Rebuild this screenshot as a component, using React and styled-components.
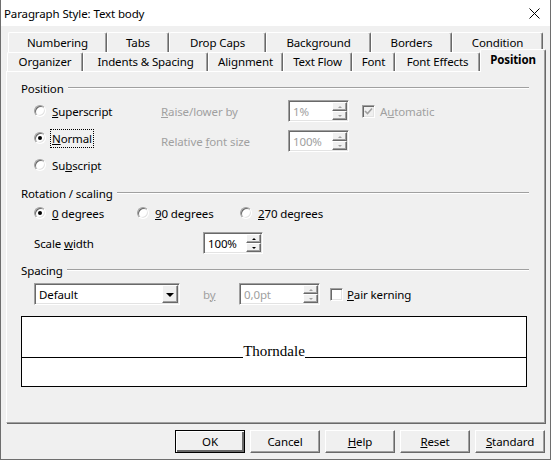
import React from "react";
import styled, { createGlobalStyle, css } from "styled-components";

const FONT = `"Noto Sans", "Segoe UI", sans-serif`;

const Global = createGlobalStyle`
  html, body { margin: 0; padding: 0; background: #f0f0f0; }
  body { font-family: ${FONT}; font-size: 11.5px; letter-spacing: -0.12px; color: #000; }
  * { box-sizing: border-box; }
`;

const Window = styled.div`
  width: 551px;
  height: 460px;
  border: 1px solid #6e6e6e;
  border-top: none;
  background: #f0f0f0;
  display: flex;
  flex-direction: column;
  overflow: hidden;
`;

const TitleBar = styled.div`
  height: 26px;
  flex: none;
  background: #fff;
  display: flex;
  align-items: center;
  justify-content: space-between;
  padding: 0 10px 0 3px;
`;

const Main = styled.div`
  padding: 6px 5px 0 5px;
  display: flex;
  flex-direction: column;
`;

const TabRow = styled.div`
  display: flex;
  align-items: flex-end;
  height: ${(p) => p.$h}px;
  margin-left: ${(p) => p.$offset}px;
`;

const Tab = styled.div`
  width: ${(p) => p.$w}px;
  height: 100%;
  flex: none;
  display: flex;
  align-items: center;
  justify-content: center;
  background: #f0f0f0;
  border-top: 1px solid #fff;
  border-left: 1px solid #fff;
  border-right: 1px solid #696969;
  box-shadow: inset -1px 0 0 #a0a0a0;
  border-radius: 2px 2px 0 0;
  white-space: nowrap;
  padding-bottom: 1px;
  ${(p) =>
    p.$active &&
    css`
      height: 23px;
      margin-bottom: -1px;
      font-weight: bold;
      position: relative;
      z-index: 1;
      padding-bottom: 3px;
    `}
`;

const Panel = styled.div`
  width: 539px;
  height: 352px;
  border: 1px solid;
  border-color: #fff #a0a0a0 #a0a0a0 #fff;
  box-shadow: 1px 1px 0 #696969;
  padding: 0 15px 0 14px;
  display: flex;
  flex-direction: column;
`;

const Section = styled.div`
  margin-top: ${(p) => p.$mt}px;
  display: flex;
  flex-direction: column;
`;

const SectionHeader = styled.div`
  display: flex;
  align-items: center;
  gap: 4px;
  height: 16px;
`;

const HeaderLine = styled.div`
  flex: 1;
  height: 2px;
  border-top: 1px solid #a0a0a0;
  border-bottom: 1px solid #fff;
`;

const Row = styled.div`
  display: flex;
  align-items: ${(p) => p.$align || "center"};
  margin-top: ${(p) => p.$mt || 0}px;
  margin-left: ${(p) => p.$ml || 0}px;
`;

const Column = styled.div`
  width: ${(p) => p.$w}px;
  flex: none;
  display: flex;
  flex-direction: column;
  gap: ${(p) => p.$gap}px;
  padding-top: ${(p) => p.$pt || 0}px;
`;

const Cell = styled.div`
  height: ${(p) => p.$h || 22}px;
  width: ${(p) => (p.$w ? `${p.$w}px` : "auto")};
  flex: none;
  display: flex;
  align-items: center;
  gap: ${(p) => p.$gap || 0}px;
  color: ${(p) => (p.$disabled ? "#a0a0a0" : "#000")};
  margin-left: ${(p) => p.$ml || 0}px;
  white-space: nowrap;
`;

const RadioCircle = styled.span`
  width: 12px;
  height: 12px;
  flex: none;
  border-radius: 50%;
  background: #fff;
  border: 1px solid;
  border-color: #a0a0a0 #fff #fff #a0a0a0;
  box-shadow: inset 1px 1px 0 #696969, inset -1px -1px 0 #e3e3e3;
  display: flex;
  align-items: center;
  justify-content: center;
  &::after {
    content: "";
    width: 4px;
    height: 4px;
    border-radius: 50%;
    background: ${(p) => (p.$checked ? "#000" : "transparent")};
  }
`;

const Focus = styled.span`
  outline: 1px dotted #000;
  outline-offset: 1px;
`;

const Sunken = styled.div`
  width: ${(p) => p.$w}px;
  height: ${(p) => p.$h || 22}px;
  flex: none;
  display: flex;
  background: #fff;
  border: 1px solid;
  border-color: #a0a0a0 #fff #fff #a0a0a0;
  box-shadow: inset 1px 1px 0 #696969, inset -1px -1px 0 #e3e3e3;
  padding: 1px;
  margin-left: ${(p) => p.$ml || 0}px;
`;

const FieldValue = styled.div`
  flex: 1;
  display: flex;
  align-items: center;
  padding-left: 3px;
  color: ${(p) => (p.$disabled ? "#a0a0a0" : "#000")};
  white-space: nowrap;
  overflow: hidden;
`;

const SpinButtons = styled.div`
  width: 15px;
  flex: none;
  display: flex;
  flex-direction: column;
`;

const SpinBtn = styled.div`
  flex: 1;
  background: #f0f0f0;
  border: 1px solid;
  border-color: #fff #696969 #696969 #fff;
  box-shadow: inset -1px -1px 0 #a0a0a0;
  display: flex;
  align-items: center;
  justify-content: center;
  &::after {
    content: "";
    border-left: 2px solid transparent;
    border-right: 2px solid transparent;
    ${(p) =>
      p.$up
        ? css`border-bottom: 2px solid ${p.$disabled ? "#a0a0a0" : "#000"};`
        : css`border-top: 2px solid ${p.$disabled ? "#a0a0a0" : "#000"};`}
  }
`;

const DropBtn = styled.div`
  width: 16px;
  flex: none;
  background: #f0f0f0;
  border: 1px solid;
  border-color: #fff #696969 #696969 #fff;
  box-shadow: inset -1px -1px 0 #a0a0a0;
  display: flex;
  align-items: center;
  justify-content: center;
  &::after {
    content: "";
    border-left: 4px solid transparent;
    border-right: 4px solid transparent;
    border-top: 4px solid #000;
    margin-top: 1px;
  }
`;

const CheckBox = styled.span`
  width: 13px;
  height: 13px;
  flex: none;
  background: ${(p) => (p.$disabled ? "#f0f0f0" : "#fff")};
  border: 1px solid;
  border-color: #a0a0a0 #fff #fff #a0a0a0;
  box-shadow: inset 1px 1px 0 #696969, inset -1px -1px 0 #e3e3e3;
  display: flex;
  align-items: center;
  justify-content: center;
`;

const Preview = styled.div`
  margin-top: 11px;
  width: 506px;
  height: 71px;
  border: 1px solid #000;
  background: #fff;
  display: flex;
  flex-direction: column;
`;

const PreviewTop = styled.div`
  height: 41px;
  display: flex;
  align-items: flex-end;
`;

const BaseLine = styled.div`
  flex: 1;
  border-bottom: 1px solid #000;
`;

const SampleText = styled.span`
  font-family: "Liberation Serif", "Times New Roman", serif;
  font-size: 15px;
  letter-spacing: 0;
  line-height: 1;
  margin-bottom: -1px;
`;

const ButtonRow = styled.div`
  display: flex;
  justify-content: flex-end;
  gap: 5px;
  margin-top: 7px;
`;

const Button = styled.button`
  width: 70px;
  height: 23px;
  font-family: ${FONT};
  font-size: 11.5px;
  letter-spacing: -0.12px;
  color: #000;
  background: #f0f0f0;
  border: 1px solid;
  border-color: #fff #696969 #696969 #fff;
  box-shadow: inset -1px -1px 0 #a0a0a0;
  padding: 0;
  ${(p) =>
    p.$default &&
    css`
      border-color: #000;
      box-shadow: inset 1px 1px 0 #fff, inset -2px -2px 0 #696969;
    `}
`;

function Radio({ checked, children, focus }) {
  return (
    <Cell $h={20} $gap={6}>
      <RadioCircle $checked={checked} />
      {focus ? <Focus>{children}</Focus> : <span>{children}</span>}
    </Cell>
  );
}

function Spin({ w, value, disabled, ml }) {
  return (
    <Sunken $w={w} $ml={ml}>
      <FieldValue $disabled={disabled}>{value}</FieldValue>
      <SpinButtons>
        <SpinBtn $up $disabled={disabled} />
        <SpinBtn $disabled={disabled} />
      </SpinButtons>
    </Sunken>
  );
}

function Check({ checked, disabled }) {
  return (
    <CheckBox $disabled={disabled}>
      {checked && (
        <svg width="9" height="9" viewBox="0 0 9 9">
          <polyline
            points="1,4 3.5,6.5 8,1.5"
            fill="none"
            stroke={disabled ? "#a0a0a0" : "#000"}
            strokeWidth="1.6"
          />
        </svg>
      )}
    </CheckBox>
  );
}

const row1 = [
  ["Numbering", 99],
  ["Tabs", 62],
  ["Drop Caps", 97],
  ["Background", 105],
  ["Borders", 81],
  ["Condition", 91],
];
const row2 = [
  ["Organizer", 76],
  ["Indents & Spacing", 125],
  ["Alignment", 75],
  ["Text Flow", 69],
  ["Font", 43],
  ["Font Effects", 85],
  ["Position", 66, true],
];

export default function App() {
  return (
    <>
      <Global />
      <Window>
        <TitleBar>
          <span>Paragraph Style: Text body</span>
          <svg width="11" height="11" viewBox="0 0 11 11">
            <path d="M0.5 0.5 L10.5 10.5 M10.5 0.5 L0.5 10.5" stroke="#000" strokeWidth="1" />
          </svg>
        </TitleBar>
        <Main>
          <TabRow $h={20} $offset={2}>
            {row1.map(([t, w]) => (
              <Tab key={t} $w={w}>{t}</Tab>
            ))}
          </TabRow>
          <TabRow $h={19} $offset={1}>
            {row2.map(([t, w, a]) => (
              <Tab key={t} $w={w} $active={a}>{t}</Tab>
            ))}
          </TabRow>
          <Panel>
            <Section $mt={8}>
              <SectionHeader>
                <span>Position</span>
                <HeaderLine />
              </SectionHeader>
              <Row $mt={4} $ml={13} $align="flex-start">
                <Column $w={127} $gap={7} $pt={1}>
                  <Radio><u>S</u>uperscript</Radio>
                  <Radio checked focus><u>N</u>ormal</Radio>
                  <Radio>Su<u>b</u>script</Radio>
                </Column>
                <Column $w={127} $gap={8}>
                  <Cell $disabled><span><u>R</u>aise/lower by</span></Cell>
                  <Cell $disabled><span>Relative <u>f</u>ont size</span></Cell>
                </Column>
                <Column $w={74} $gap={8}>
                  <Spin w={61} value="1%" disabled />
                  <Spin w={61} value="100%" disabled />
                </Column>
                <Cell $disabled $gap={5}>
                  <Check checked disabled />
                  <span>A<u>u</u>tomatic</span>
                </Cell>
              </Row>
            </Section>

            <Section $mt={10}>
              <SectionHeader>
                <span>Rotation / scaling</span>
                <HeaderLine />
              </SectionHeader>
              <Row $mt={2} $ml={13}>
                <Cell $w={103} $h={20}><Radio checked><u>0</u> degrees</Radio></Cell>
                <Cell $w={103} $h={20}><Radio><u>9</u>0 degrees</Radio></Cell>
                <Cell $w={103} $h={20}><Radio><u>2</u>70 degrees</Radio></Cell>
              </Row>
              <Row $mt={9} $ml={13}>
                <Cell $w={169}><span>Scale <u>w</u>idth</span></Cell>
                <Spin w={60} value="100%" />
              </Row>
            </Section>

            <Section $mt={8}>
              <SectionHeader>
                <span>Spacing</span>
                <HeaderLine />
              </SectionHeader>
              <Row $mt={5} $ml={13}>
                <Sunken $w={146}>
                  <FieldValue>Default</FieldValue>
                  <DropBtn />
                </Sunken>
                <Cell $w={36} $ml={23} $disabled><span>b<u>y</u></span></Cell>
                <Spin w={81} value="0,0pt" disabled />
                <Cell $ml={10} $gap={4}>
                  <Check />
                  <span><u>P</u>air kerning</span>
                </Cell>
              </Row>
              <Preview>
                <PreviewTop>
                  <BaseLine />
                  <SampleText>Thorndale</SampleText>
                  <BaseLine />
                </PreviewTop>
              </Preview>
            </Section>
          </Panel>
          <ButtonRow>
            <Button $default>OK</Button>
            <Button>Cancel</Button>
            <Button><u>H</u>elp</Button>
            <Button><u>R</u>eset</Button>
            <Button><u>S</u>tandard</Button>
          </ButtonRow>
        </Main>
      </Window>
    </>
  );
}
